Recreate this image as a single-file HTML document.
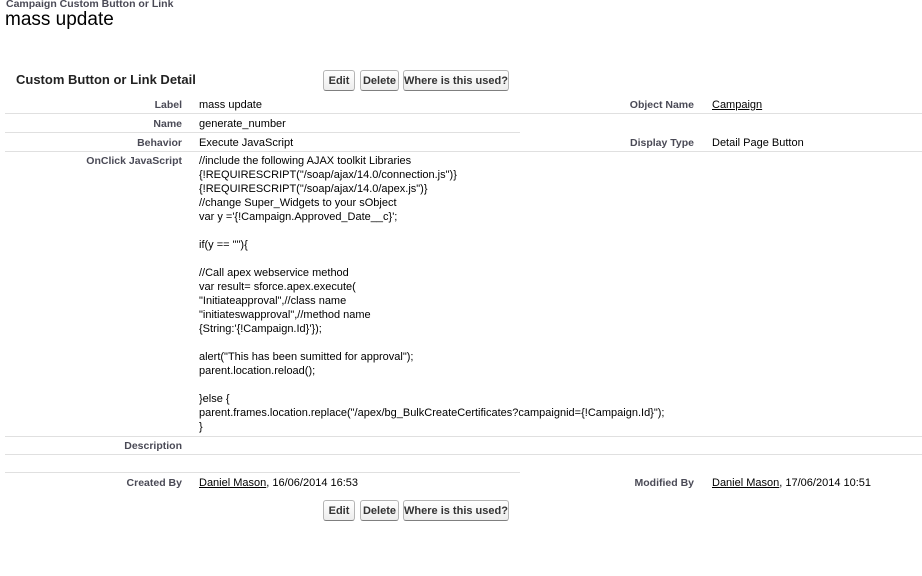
<!DOCTYPE html>
<html><head><style>
body{margin:0;width:922px;height:576px;background:#fff;font-family:"Liberation Sans",Arial,sans-serif;color:#000;position:relative;overflow:hidden}
.a{position:absolute;white-space:nowrap}
.lb{position:absolute;font-size:10.5px;font-weight:bold;color:#4a4a56;text-align:right;white-space:nowrap}
.v{position:absolute;font-size:11px;white-space:nowrap}
.ln{position:absolute;height:1px;background:#e0e0e0}
.btn{position:absolute;height:19px;border:1px solid #b5b5b5;border-bottom-color:#7f7f7f;border-radius:3px;background:linear-gradient(#fff,#ededed);font-size:11px;font-weight:bold;color:#333;text-align:center;line-height:20px}
u{text-decoration:underline}
.code{position:absolute;left:199px;top:154px;font-size:11px;line-height:14px;white-space:pre}
</style></head><body>
<div class="a" style="left:6px;top:-2px;font-size:10.5px;font-weight:bold;color:#4a4a56">Campaign Custom Button or Link</div>
<div class="a" style="left:5px;top:9px;font-size:19px">mass update</div>
<div class="a" style="left:16px;top:72px;font-size:13px;font-weight:bold;color:#222">Custom Button or Link Detail</div>
<div class="btn" style="left:323px;top:70px;width:30px">Edit</div>
<div class="btn" style="left:360px;top:70px;width:37px">Delete</div>
<div class="btn" style="left:403px;top:70px;width:104px">Where is this used?</div>

<div class="lb" style="right:740px;top:99px">Label</div><div class="v" style="left:199px;top:99px">mass update</div>
<div class="lb" style="right:228px;top:99px">Object Name</div><div class="v" style="left:712px;top:99px"><u>Campaign</u></div>
<div class="ln" style="left:5px;right:0;top:113px"></div>
<div class="lb" style="right:740px;top:118px">Name</div><div class="v" style="left:199px;top:118px">generate_number</div>
<div class="ln" style="left:5px;width:515px;top:132px"></div>
<div class="lb" style="right:740px;top:137px">Behavior</div><div class="v" style="left:199px;top:137px">Execute JavaScript</div>
<div class="lb" style="right:228px;top:137px">Display Type</div><div class="v" style="left:712px;top:137px">Detail Page Button</div>
<div class="ln" style="left:5px;right:0;top:151px"></div>
<div class="lb" style="right:740px;top:155px">OnClick JavaScript</div>
<div class="code">//include the following AJAX toolkit Libraries
{!REQUIRESCRIPT("/soap/ajax/14.0/connection.js")}
{!REQUIRESCRIPT("/soap/ajax/14.0/apex.js")}
//change Super_Widgets to your sObject
var y ='{!Campaign.Approved_Date__c}';

if(y == ""){

//Call apex webservice method
var result= sforce.apex.execute(
"Initiateapproval",//class name
"initiateswapproval",//method name
{String:'{!Campaign.Id}'});

alert("This has been sumitted for approval");
parent.location.reload();

}else {
parent.frames.location.replace("/apex/bg_BulkCreateCertificates?campaignid={!Campaign.Id}");
}</div>
<div class="ln" style="left:5px;right:0;top:436px"></div>
<div class="lb" style="right:740px;top:440px">Description</div>
<div class="ln" style="left:5px;right:0;top:454px"></div>
<div class="ln" style="left:5px;width:515px;top:472px"></div>
<div class="lb" style="right:740px;top:477px">Created By</div><div class="v" style="left:199px;top:477px"><u>Daniel Mason</u>, 16/06/2014 16:53</div>
<div class="lb" style="right:228px;top:477px">Modified By</div><div class="v" style="left:712px;top:477px"><u>Daniel Mason</u>, 17/06/2014 10:51</div>
<div class="btn" style="left:323px;top:500px;width:30px">Edit</div>
<div class="btn" style="left:360px;top:500px;width:37px">Delete</div>
<div class="btn" style="left:403px;top:500px;width:104px">Where is this used?</div>
</body></html>
